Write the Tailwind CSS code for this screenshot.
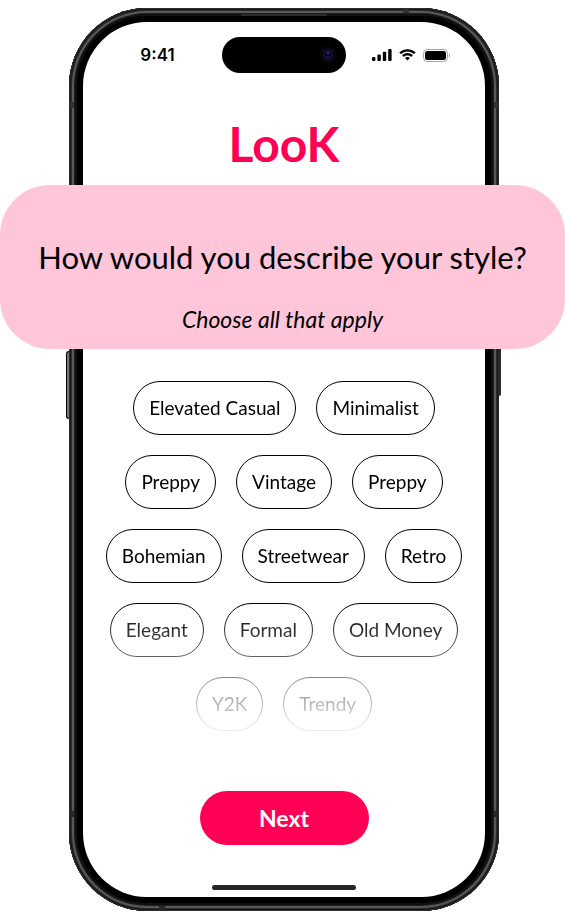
<!DOCTYPE html>
<html lang="en">
<head>
<meta charset="utf-8">
<meta name="viewport" content="width=device-width, initial-scale=1">
<title>LooK</title>
<script src="https://cdn.jsdelivr.net/npm/@tailwindcss/browser@4"></script>
</head>
<body class="bg-white font-['Lato','Open_Sans',sans-serif] text-black">
<main class="overflow-hidden pt-2 pb-2">
  <div class="relative mr-[66px] ml-[69px] rounded-[78px] bg-black p-[14px] shadow-[inset_0_0_0_1px_#2c2c2c,inset_0_0_0_2px_#161616,inset_0_0_0_3px_#2e2e2e,inset_0_0_0_5px_#585858,inset_0_0_0_6px_#1c1c1c,inset_0_0_0_8px_#101010]">
    <!-- side buttons -->
    <span class="absolute top-[343px] -left-[3px] h-[68px] w-[3px] rounded-l-sm border border-r-0 border-black bg-[#77777a]"></span>
    <span class="absolute top-[300px] -right-[2px] h-[88px] w-[2px] rounded-r-sm bg-[#2b2b2b]"></span>
    <!-- antenna bands -->
    <span class="absolute top-[94px] left-px h-[6px] w-1 bg-[#303232]"></span>
    <span class="absolute top-[94px] right-px h-[6px] w-1 bg-[#303232]"></span>
    <span class="absolute bottom-[94px] left-px h-[6px] w-1 bg-[#262828]"></span>
    <span class="absolute right-px bottom-[94px] h-[6px] w-1 bg-[#262828]"></span>
    <span class="absolute top-px right-[90px] h-1 w-[6px] bg-[#303232]"></span>
    <span class="absolute bottom-px left-[90px] h-1 w-[6px] bg-[#262828]"></span>
    <!-- earpiece -->
    <span class="absolute inset-x-0 top-[6px] mx-auto h-[2px] w-[86px] rounded-full bg-[#2a2a2a]"></span>
    <div class="rounded-[64px] bg-white pt-[15px] pb-[7px]">
      <header class="flex h-9 items-center">
        <div class="flex flex-1 justify-center pl-[10px]"><time class="font-['Inter',sans-serif] text-[17px] leading-6 font-semibold">9:41</time></div>
        <div class="flex h-9 w-[124px] items-center justify-end rounded-full bg-black pr-[10px]">
          <svg class="size-4" viewBox="0 0 16 16" aria-hidden="true"><circle cx="8" cy="8" r="8" fill="#0b0710"/><circle cx="8" cy="8" r="5" fill="#10103a"/><circle cx="8" cy="8" r="3" fill="#06061a"/><circle cx="8" cy="6" r="1.2" fill="#2d2d86"/><circle cx="8" cy="10" r="1" fill="#24246c"/></svg>
        </div>
        <div class="flex flex-1 items-center justify-center gap-[7px] pr-[10px]">
          <svg class="h-3 w-5" viewBox="0 0 20 12" aria-label="Signal"><rect x="0" y="8" width="3.4" height="4" rx="1"/><rect x="5.4" y="5.4" width="3.4" height="6.6" rx="1"/><rect x="10.8" y="2.8" width="3.4" height="9.2" rx="1"/><rect x="16.2" y="0" width="3.4" height="12" rx="1"/></svg>
          <svg class="h-3 w-[17px]" viewBox="0 0 17 12" aria-label="Wi-Fi"><path d="M8.5 2.5c2.4 0 4.6.9 6.3 2.5.1.1.3.1.4 0l1.2-1.2c.1-.1.1-.3 0-.5-4.4-4.2-11.4-4.2-15.8 0-.1.1-.1.3 0 .5L1.8 5c.1.1.3.1.4 0C3.9 3.400 6.100 2.500 8.500 2.500zM8.500 6.400c1.300 0 2.600.5 3.500 1.400.1.1.3.1.5 0l1.200-1.200c.1-.1.1-.3 0-.5-2.900-2.700-7.500-2.700-10.400 0-.1.1-.1.300 0 .5l1.200 1.200c.2.100.400.100.500 0 1-.900 2.200-1.400 3.500-1.400zM10.800 9.200c.1-.1.1-.3 0-.500-1.300-1.100-3.300-1.100-4.600 0-.1.100-.1.300 0 .500l2.100 2.100c.1.100.300.100.400 0z"/></svg>
          <svg class="h-[13px] w-[27px]" viewBox="0 0 27 13" aria-label="Battery"><rect x=".5" y=".5" width="24" height="12" rx="3.8" fill="none" stroke="#000" stroke-opacity=".35"/><rect x="2" y="2" width="21" height="9" rx="2.5"/><path d="M26 4.500v4c.8-.3 1-1.200 1-2s-.2-1.700-1-2z" opacity=".4"/></svg>
        </div>
      </header>
      <p class="mt-[41px] mb-[11px] text-center text-5xl leading-[60px] font-bold text-[#ff0054]">LooK</p>
      <section class="relative -mr-20 -ml-[83px] rounded-[50px] bg-[#ffc5d9] pt-[52px] pb-3 text-center">
        <h1 class="text-[31px] leading-10">How would you describe your style?</h1>
        <p class="mt-6 text-[23px] leading-9 italic">Choose all that apply</p>
      </section>
      <div class="mt-8 flex flex-col gap-5 text-[19px] [mask-image:linear-gradient(black_224px,transparent_361px)]">
        <div class="flex justify-center gap-5">
          <button class="h-[54px] rounded-full border border-black px-[15px]">Elevated Casual</button>
          <button class="h-[54px] rounded-full border border-black px-[15px]">Minimalist</button>
        </div>
        <div class="flex justify-center gap-5">
          <button class="h-[54px] rounded-full border border-black px-[15px]">Preppy</button>
          <button class="h-[54px] rounded-full border border-black px-[15px]">Vintage</button>
          <button class="h-[54px] rounded-full border border-black px-[15px]">Preppy</button>
        </div>
        <div class="flex justify-center gap-5">
          <button class="h-[54px] rounded-full border border-black px-[15px]">Bohemian</button>
          <button class="h-[54px] rounded-full border border-black px-[15px]">Streetwear</button>
          <button class="h-[54px] rounded-full border border-black px-[15px]">Retro</button>
        </div>
        <div class="flex justify-center gap-5">
          <button class="h-[54px] rounded-full border border-black px-[15px]">Elegant</button>
          <button class="h-[54px] rounded-full border border-black px-[15px]">Formal</button>
          <button class="h-[54px] rounded-full border border-black px-[15px]">Old Money</button>
        </div>
        <div class="flex justify-center gap-5">
          <button class="h-[54px] rounded-full border border-black px-[15px]">Y2K</button>
          <button class="h-[54px] rounded-full border border-black px-[15px]">Trendy</button>
        </div>
      </div>
      <button class="mx-auto mt-[60px] block h-[54px] w-[169px] rounded-full bg-[#ff0054] text-[23px] font-bold text-white">Next</button>
      <div class="mx-auto mt-10 h-[5px] w-36 rounded-full bg-[#262626]"></div>
    </div>
  </div>
</main>
</body>
</html>
